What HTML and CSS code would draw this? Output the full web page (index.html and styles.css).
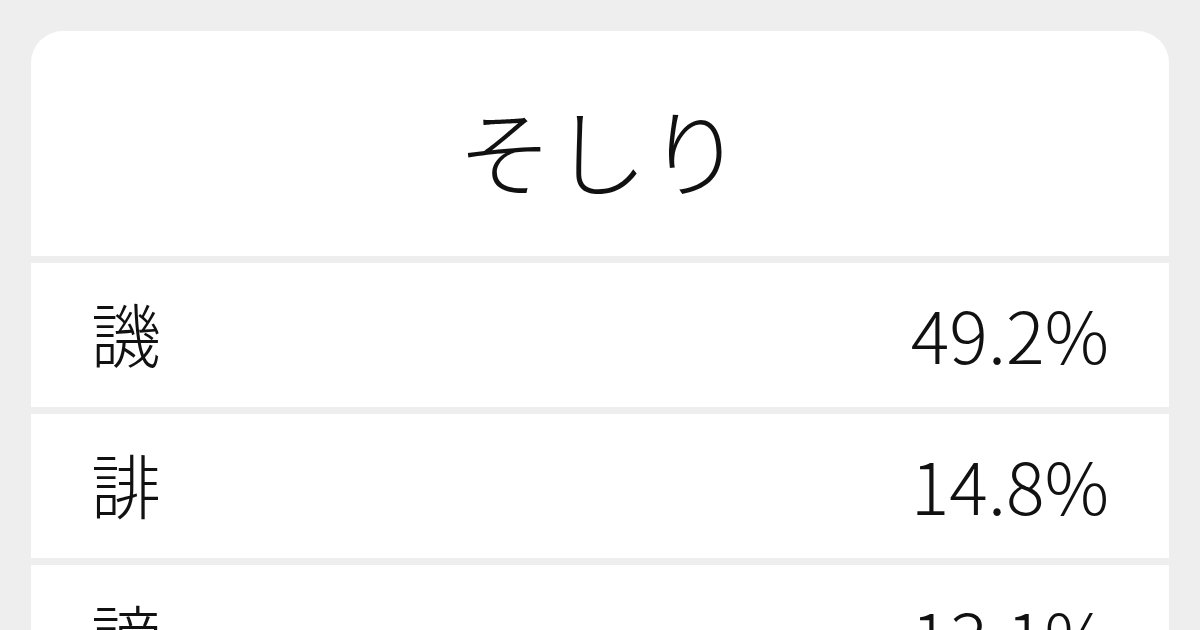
FILE: index.html
```html
<!DOCTYPE html>
<html lang="ja">
<head>
    <meta charset="UTF-8">
    <title>そしり</title>
    <link rel="stylesheet" href="styles.css">
</head>
<body>

<div class="card">
    <div class="title">そしり</div>
    <div class="row">
        <div class="kanji">譏</div>
        <div class="rate">49.2%</div>
    </div>
    <div class="row">
        <div class="kanji">誹</div>
        <div class="rate">14.8%</div>
    </div>
    <div class="row">
        <div class="kanji">謗</div>
        <div class="rate">13.1%</div>
    </div>
</div>

</body>
</html>
```

FILE: styles.css
```css
body {
    margin: 0;
    padding: 31px 31px 0;
    background: #eeeeee;
    font-family: "Noto Sans CJK JP", "Noto Sans", sans-serif;
    font-weight: 300;
    color: #111;
    height: 630px;
    box-sizing: border-box;
    overflow: hidden;
}

.card {
    display: flex;
    flex-direction: column;
    gap: 7px;
}

.title {
    background: #fff;
    border-radius: 32px 32px 0 0;
    height: 225px;
    display: flex;
    align-items: center;
    justify-content: center;
    font-size: 95px;
    line-height: 1;
    padding-top: 10px;
    box-sizing: border-box;
}

.row {
    background: #fff;
    height: 144px;
    flex-shrink: 0;
    display: flex;
    align-items: center;
    justify-content: space-between;
    padding: 0 60px 4px 60px;
    box-sizing: border-box;
    font-size: 70px;
    line-height: 1;
}

.rate {
    font-size: 72px;
}
```
